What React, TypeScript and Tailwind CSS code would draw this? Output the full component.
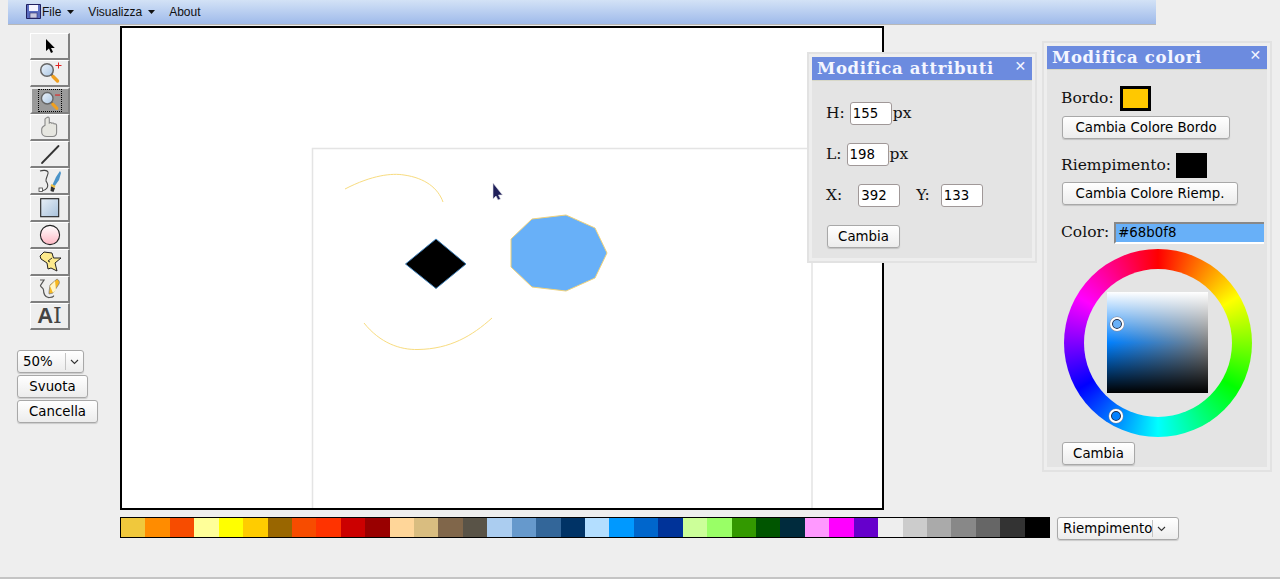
import React from "react";

const SWATCHES = ["#f0c83c","#ff8c00","#f74c00","#ffff99","#ffff00","#ffcc00","#996600","#f74c00","#ff3300","#cc0000","#990000","#ffd699","#d9bd80","#80664a","#595347","#abcdf0","#6699cc","#336699","#003366","#b3deff","#0099ff","#0066cc","#003399","#ccff99","#99ff66","#339900","#005500","#002b3d","#ff99ff","#ff00ff","#6600cc","#eeeeee","#cccccc","#aaaaaa","#888888","#666666","#333333","#000000"];

const sans = "font-['DejaVu_Sans',sans-serif]";
const serif = "font-['DejaVu_Serif',serif]";

function Btn({ children, className = "" }: { children: React.ReactNode; className?: string }) {
  return (
    <button className={`h-[23px] rounded-[3px] border border-[#a8a8a8] bg-gradient-to-b from-white to-[#ececec] text-[13.33px] leading-[21px] text-black shadow-[0_1px_1px_rgba(0,0,0,0.15)] ${sans} ${className}`}>
      {children}
    </button>
  );
}

function Sel({ label, className = "", inner }: { label: string; className?: string; inner: string }) {
  return (
    <div className={`flex h-[23px] items-center rounded-[3px] border border-[#a8a8a8] bg-gradient-to-b from-white to-[#ececec] text-[13.33px] text-black shadow-[0_1px_1px_rgba(0,0,0,0.15)] ${sans} ${className}`}>
      <span className={`whitespace-nowrap pl-[5px] ${inner}`}>{label}</span>
      <span className="flex h-[17px] w-[18px] items-center justify-center border-l border-[#c4c4c4]">
        <svg width="9" height="6" viewBox="0 0 9 6"><path d="M1 1l3.5 3.5L8 1" fill="none" stroke="#333" strokeWidth="1.1" /></svg>
      </span>
    </div>
  );
}

function Caret() {
  return <svg width="7" height="4" viewBox="0 0 7 4" className="ml-[6px]"><path d="M0 0h7L3.5 4z" fill="#111" /></svg>;
}

const Mag = ({ sign }: { sign?: "+" | "-" }) => (
  <svg width="24" height="24" viewBox="0 0 24 24">
    <defs><linearGradient id="gl" x1="0" y1="0" x2="1" y2="1"><stop offset="0" stopColor="#eef4fb" /><stop offset="1" stopColor="#a9c6e4" /></linearGradient></defs>
    <path d="M12.5 12.5L19 19" stroke="#555" strokeWidth="2" />
    <path d="M15 15.5L19.5 20" stroke="#f0a020" strokeWidth="3.4" strokeLinecap="round" />
    <circle cx="9" cy="9" r="6.3" fill="url(#gl)" stroke="#666" strokeWidth="1.5" />
    {sign === "+" && <path d="M17.5 4.5h6M20.5 1.5v6" stroke="#e02020" strokeWidth="1" />}
    {sign === "-" && <path d="M17.5 5.5h5.5" stroke="#e02020" strokeWidth="1.2" />}
  </svg>
);

const TOOL_ICONS: React.ReactNode[] = [
  <svg width="14" height="16" viewBox="0 0 14 16"><path d="M3 1v12l3-2.5L8 15l2-1-2-4h3.8z" fill="#000" /></svg>,
  <Mag sign="+" />,
  <Mag sign="-" />,
  <svg width="22" height="24" viewBox="0 0 22 24"><path d="M8 2.5c1.2-1 2.3 0 2.3 1.2V8c1-.7 2-.4 2.5.3 1-.6 2-.2 2.3.6 1.3-.4 2.5.3 2.5 1.7v7c0 2.2-1.6 3.9-4 3.9H8c-3 0-5.3-1.5-5.3-4.2v-3.2c0-1.5 1.8-3 3.3-3.8V4c0-.7.9-1 2-1.5z" fill="#e6e6e0" stroke="#888" strokeWidth="1.1" /></svg>,
  <svg width="22" height="22" viewBox="0 0 22 22"><path d="M3 20L19.5 3" stroke="#333" strokeWidth="1.8" strokeLinecap="round" /></svg>,
  <svg width="24" height="24" viewBox="0 0 24 24"><path d="M2 2c3-1 7-1 8 1s-3 7-2 9 3 4 1 7-4 2-6 3" fill="none" stroke="#444" strokeWidth="1.1" /><rect x="1" y="19" width="3.5" height="3.5" fill="#fff" stroke="#444" strokeWidth="0.8" /><path d="M14 17l4-9 4-6 1 2-2 7-5 7z" fill="#4a93c8" /><path d="M13 17l4 2-1.5 4-3-1z" fill="#333" /><path d="M13.5 15l4 2-1 2-4-2z" fill="#f0c040" /></svg>,
  <svg width="20" height="20" viewBox="0 0 20 20"><defs><linearGradient id="rg" x1="0" y1="0" x2="1" y2="1"><stop offset="0" stopColor="#e8eff7" /><stop offset="1" stopColor="#a8c2dc" /></linearGradient></defs><rect x="0.7" y="0.7" width="18" height="18" fill="url(#rg)" stroke="#222" strokeWidth="1.1" /></svg>,
  <svg width="22" height="22" viewBox="0 0 22 22"><defs><linearGradient id="cg" x1="0" y1="0" x2="0" y2="1"><stop offset="0" stopColor="#fff" /><stop offset="1" stopColor="#ffb8c4" /></linearGradient></defs><circle cx="11" cy="11" r="9.6" fill="url(#cg)" stroke="#222" strokeWidth="1.1" /></svg>,
  <svg width="24" height="23" viewBox="0 0 24 23"><path d="M6 1l8 1 1.5 5H23l-6 5 2 8-6-3-3 1-1-6-6-4-1-3z" fill="#fdea8c" stroke="#222" strokeWidth="1" /><path d="M14 7l-4 3 2 1" fill="none" stroke="#222" strokeWidth="0.9" /></svg>,
  <svg width="24" height="24" viewBox="0 0 24 24"><path d="M2 3h4L2.5 8.5c0 2 3 2 3 4.500s1 8 6 7.500 4-2 4-2" fill="none" stroke="#555" strokeWidth="1.2" /><path d="M11 15l1-7 7-6c2 1 3 3 2 5l-6 9-4 1z" fill="#f8b820" stroke="#777" strokeWidth="0.7" /><path d="M12 9l5-5 1 9-3 3z" fill="#fff6c8" /></svg>,
];

function Tools() {
  return (
    <div className="flex w-[40px] flex-col">
      {TOOL_ICONS.map((ic, i) => (
        <div key={i} className={i === 2
          ? "flex h-[27px] w-[40px] items-center justify-center border-l-2 border-t-2 border-[#eee] border-r-2 border-r-[#808080] border-b-2 border-b-[#808080] bg-[#9a9a9a]"
          : "flex h-[27px] w-[40px] items-center justify-center border-l border-t border-white border-r-2 border-r-[#808080] border-b-2 border-b-[#808080] bg-[#eeeeee]"}>
          {i === 2 ? <span className="flex h-[23px] w-[24px] items-center justify-center border border-dotted border-black">{ic}</span> : ic}
        </div>
      ))}
      <div className="flex h-[27px] w-[40px] items-center justify-center border-l border-t border-white border-r-2 border-r-[#808080] border-b-2 border-b-[#808080] bg-[#eeeeee] font-['Liberation_Sans',sans-serif] text-[22px] leading-none font-bold text-[#444]">
        A<span className="font-['DejaVu_Serif',serif] font-normal">I</span>
      </div>
    </div>
  );
}

function Art() {
  return (
    <svg className="absolute inset-0" width="760" height="480" viewBox="122 28 760 480">
      <path d="M812 510V148.500H312.500V510" fill="none" stroke="#e4e4e4" strokeWidth="1.500" />
      <path d="M345 189C372 175 392 173 404 175C425 178 438 188 443 202" fill="none" stroke="#f8dc80" strokeWidth="1" />
      <path d="M364 323C380 343 400 350 418 349.500C450 349 472 336 492 318" fill="none" stroke="#f8dc80" strokeWidth="1" />
      <polygon points="405.500,264 436,239 466,264 436,288.500" fill="#000" stroke="#3d7fb8" strokeWidth="1" />
      <polygon points="511,239 532,219 566,215 595,228 607,253 595,278 566,291 532,287 511,267" fill="#68b0f8" stroke="#f0d27a" strokeWidth="1" />
      <path d="M493 183v16l3-3 2 4 2.500-1-2-4h4z" fill="#20205a" stroke="#e0e0e8" strokeWidth="0.6" />
    </svg>
  );
}

function Panel({ title, className, children }: { title: string; className: string; children: React.ReactNode }) {
  return (
    <div className={`absolute w-[230px] border-2 border-[#e2e2e2] bg-[#eeeeee] px-[3px] pt-[3px] pb-[3px] ${className}`}>
      <div className="relative h-[24px] border-b border-[#d8d8c8] bg-[#6c8bdf] pl-[5px] text-[16.5px] leading-[23px] font-bold tracking-[0.65px] whitespace-nowrap text-[#f4f6ff] font-['DejaVu_Serif',serif]">
        {title}
        <span className="absolute top-[-1px] right-[5px] font-['DejaVu_Sans',sans-serif] text-[14px] leading-[20px]">✕</span>
      </div>
      <div className="bg-[#e4e4e4]">{children}</div>
    </div>
  );
}

function Num({ v, className = "" }: { v: string; className?: string }) {
  return <span className={`box-border flex h-[23px] w-[42px] items-center rounded-[3px] border border-[#a09898] bg-white pl-[2px] text-[13.33px] text-black ${sans} ${className}`}>{v}</span>;
}

export default function App() {
  const lab = `${serif} text-[15.5px] text-[#111]`;
  return (
    <div className="relative h-[579px] w-[1280px] overflow-hidden border-b-2 border-[#c4c4c4] bg-[#eeeeee]">
      <div className="ml-[8px] flex h-[25px] w-[1148px] items-center border-b border-[#b8b8b8] bg-gradient-to-b from-[#d3e2f6] to-[#9fbaea] pb-[1px] font-['Liberation_Sans',sans-serif] text-[12px] text-[#111]">
        <svg width="15" height="15" viewBox="0 0 15 15" className="ml-[18px]"><path d="M.5.500h14v14H.500z" fill="#5a6cc0" stroke="#202060" /><rect x="3" y="1" width="9" height="6" fill="#f4f4ff" /><rect x="4" y="9" width="7" height="5" fill="#c8c8e0" stroke="#303070" strokeWidth="0.6" /></svg>
        <span className="ml-[1px]">File</span><Caret />
        <span className="ml-[14px]">Visualizza</span><Caret />
        <span className="ml-[14px]">About</span>
      </div>

      <div className="flex">
        <div className="flex w-[120px] flex-col pt-[8px]">
          <div className="ml-[30px]"><Tools /></div>
          <div className="mt-[20px] ml-[17px] flex flex-col items-start gap-[2px]">
            <Sel label="50%" inner="w-[48px]" className="w-[67px]" />
            <Btn className="w-[71px]">Svuota</Btn>
            <Btn className="w-[81px]">Cancella</Btn>
          </div>
        </div>
        <div className="pt-[1px]">
          <div className="relative h-[484px] w-[764px] border-2 border-black bg-white"><Art /></div>
          <div className="mt-[7px] flex items-start">
            <div className="flex h-[21px] w-[930px] border border-black">
              {SWATCHES.map((c, i) => <div key={i} className="h-full flex-1" style={{ background: c }} />)}
            </div>
            <Sel label="Riempimento" inner="" className="ml-[7px] w-[122px]" />
          </div>
        </div>
      </div>

      <Panel title="Modifica attributi" className="top-[52px] left-[807px]">
        <div className="h-[177px] pt-[21px] pl-[14px]">
          <div className={`flex h-[23px] items-center ${lab}`}>H:<Num v="155" className="ml-[5px]" /><span className="ml-[1px]">px</span></div>
          <div className={`mt-[18px] flex h-[23px] items-center ${lab}`}>L:<Num v="198" className="ml-[5px]" /><span className="ml-[1px]">px</span></div>
          <div className={`mt-[18px] flex h-[23px] items-center ${lab}`}>X:<Num v="392" className="ml-[16px]" /><span className="ml-[16px]">Y:</span><Num v="133" className="ml-[11px]" /></div>
          <Btn className="mt-[18px] ml-[1px] w-[73px]">Cambia</Btn>
        </div>
      </Panel>

      <Panel title="Modifica colori" className="top-[41px] left-[1042px]">
        <div className="h-[397px] pt-[16px] pl-[14px]">
          <div className={`flex h-[25px] items-center ${lab}`}>Bordo:<span className="ml-[6px] h-[25px] w-[31px] border-[3px] border-black bg-[#ffc800]" /></div>
          <Btn className="mt-[5px] ml-[1px] block w-[168px]">Cambia Colore Bordo</Btn>
          <div className={`mt-[14px] flex h-[25px] items-center ${lab}`}>Riempimento:<span className="ml-[5px] h-[25px] w-[31px] bg-black" /></div>
          <Btn className="mt-[4px] ml-[1px] block w-[176px]">Cambia Colore Riemp.</Btn>
          <div className={`mt-[17px] flex h-[22px] items-center ${lab}`}>
            Color:
            <span className={`ml-[5px] box-border flex h-[22px] w-[150px] items-center border-t-2 border-l-2 border-b-2 border-t-[#888] border-l-[#888] border-b-white bg-[#68b0f8] pl-[2px] text-[13.33px] text-black ${sans}`}>#68b0f8</span>
          </div>
          <div className="relative mt-[5px] ml-[3px] h-[188px] w-[188px] rounded-full bg-[conic-gradient(#ff0000,#ffff00,#00ff00,#00ffff,#0000ff,#ff00ff,#ff0000)]">
            <div className="absolute top-[20px] left-[20px] h-[148px] w-[148px] rounded-full bg-[#e4e4e4]" />
            <div className="absolute top-[43px] left-[43px] h-[101px] w-[101px] bg-[linear-gradient(to_bottom,#ffffff,rgba(255,255,255,0)_50%,rgba(0,0,0,0)_50%,#000000),linear-gradient(to_right,#0080ff,#808080)]" />
            <span className="absolute top-[68px] left-[46px] h-[14px] w-[14px] rounded-full border-2 border-white bg-[#68b0f8] shadow-[inset_0_0_0_1px_#223,0_0_0_0.5px_#889]" />
            <span className="absolute top-[160px] left-[45px] h-[14px] w-[14px] rounded-full border-2 border-white bg-[#0080ff] shadow-[inset_0_0_0_1px_#223,0_0_0_0.5px_#889]" />
          </div>
          <Btn className="mt-[5px] ml-[1px] block w-[73px]">Cambia</Btn>
        </div>
      </Panel>
    </div>
  );
}
